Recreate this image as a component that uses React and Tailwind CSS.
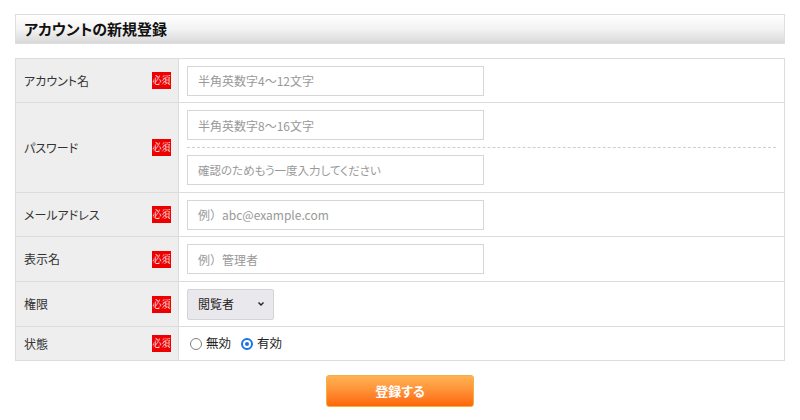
import React from "react";

const font = {
  fontFamily: '"Noto Sans CJK JP", "Noto Sans", sans-serif',
  fontFeatureSettings: '"palt"',
};
const fontPlain = {
  fontFamily: '"Noto Sans CJK JP", "Noto Sans", sans-serif',
  fontFeatureSettings: "normal",
};

function Badge() {
  return (
    <span className="flex h-[17px] w-[19px] items-center justify-center overflow-hidden bg-[#ee0000] text-white">
      <span className="inline-block scale-x-[0.85] whitespace-nowrap text-[10.5px] leading-none [font-family:'Noto_Serif_CJK_JP','Noto_Sans_CJK_JP',serif]">
        必須
      </span>
    </span>
  );
}

function Label({ children }) {
  return (
    <div className="flex w-[163px] shrink-0 items-center justify-between border-r border-[#dcdcdc] bg-[#eeeeee] pl-[8px] pr-[7px] text-[12px] text-[#333]">
      <span>{children}</span>
      <Badge />
    </div>
  );
}

function Input({ placeholder, plain, size = "text-[12px]" }) {
  return (
    <input
      className={`h-[30px] w-[297px] border border-[#d6d6d6] bg-white px-[10px] ${size} text-[#333] outline-none placeholder:text-[#999]`}
      placeholder={placeholder}
      style={plain ? fontPlain : font}
    />
  );
}

function Row({ label, children, h, last }) {
  return (
    <div className={`flex ${last ? "" : "border-b border-[#dcdcdc]"} ${h}`}>
      <Label>{label}</Label>
      <div className="flex flex-1 flex-col justify-center pl-[8px]">{children}</div>
    </div>
  );
}

export default function App() {
  return (
    <div className="min-h-[420px] w-[800px] bg-white pt-[14px]" style={font}>
      <div className="mx-[15px] flex h-[30px] items-center border border-[#dedede] bg-gradient-to-b from-white via-[#f3f3f3] to-[#d9d9d9] pl-[8px] text-[15px] font-bold text-[#111]">
        アカウントの新規登録
      </div>
      <div className="mx-[15px] mt-[14px] border border-[#dcdcdc]">
        <Row label="アカウント名" h="h-[44px]">
          <Input placeholder="半角英数字4〜12文字" />
        </Row>
        <Row label="パスワード" h="h-[90px]">
          <Input placeholder="半角英数字8〜16文字" />
          <div className="my-[7px] mr-[8px] border-t border-dashed border-[#cfcfcf]" />
          <Input placeholder="確認のためもう一度入力してください" size="text-[11.5px]" />
        </Row>
        <Row label="メールアドレス" h="h-[44px]">
          <Input placeholder="例）abc@example.com" plain />
        </Row>
        <Row label="表示名" h="h-[45px]">
          <Input placeholder="例）管理者" plain />
        </Row>
        <Row label="権限" h="h-[45px]">
          <div className="flex h-[31px] w-[87px] items-center justify-between rounded-[2px] border border-[#d4d4d4] bg-[#e9e9ed] pl-[10px] pr-[7px] text-[12px] text-[#222]">
            <span>閲覧者</span>
            <svg width="10" height="10" viewBox="0 0 10 10">
              <path d="M2.5 3.5 L5 6 L7.5 3.5" fill="none" stroke="#222" strokeWidth="1.4" />
            </svg>
          </div>
        </Row>
        <Row label="状態" h="h-[33px]" last>
          <div className="flex items-center pl-[3px] text-[12.5px] text-[#222]">
            <span className="mr-[4px] inline-block h-[12px] w-[12px] rounded-full border border-[#808080] bg-white" />
            <span className="mr-[10px]">無効</span>
            <span className="mr-[4px] flex h-[12px] w-[12px] items-center justify-center rounded-full border-2 border-[#1a73e8] bg-white">
              <span className="h-[4px] w-[4px] rounded-full bg-[#1a73e8]" />
            </span>
            <span>有効</span>
          </div>
        </Row>
      </div>
      <div className="mt-[14px] flex justify-center">
        <button
          className="flex h-[32px] w-[148px] items-center justify-center rounded-[3px] border border-[#f2b040] bg-gradient-to-b from-[#ffb354] to-[#ff6600] text-[13px] font-bold text-white"
          style={font}
        >
          登録する
        </button>
      </div>
    </div>
  );
}
